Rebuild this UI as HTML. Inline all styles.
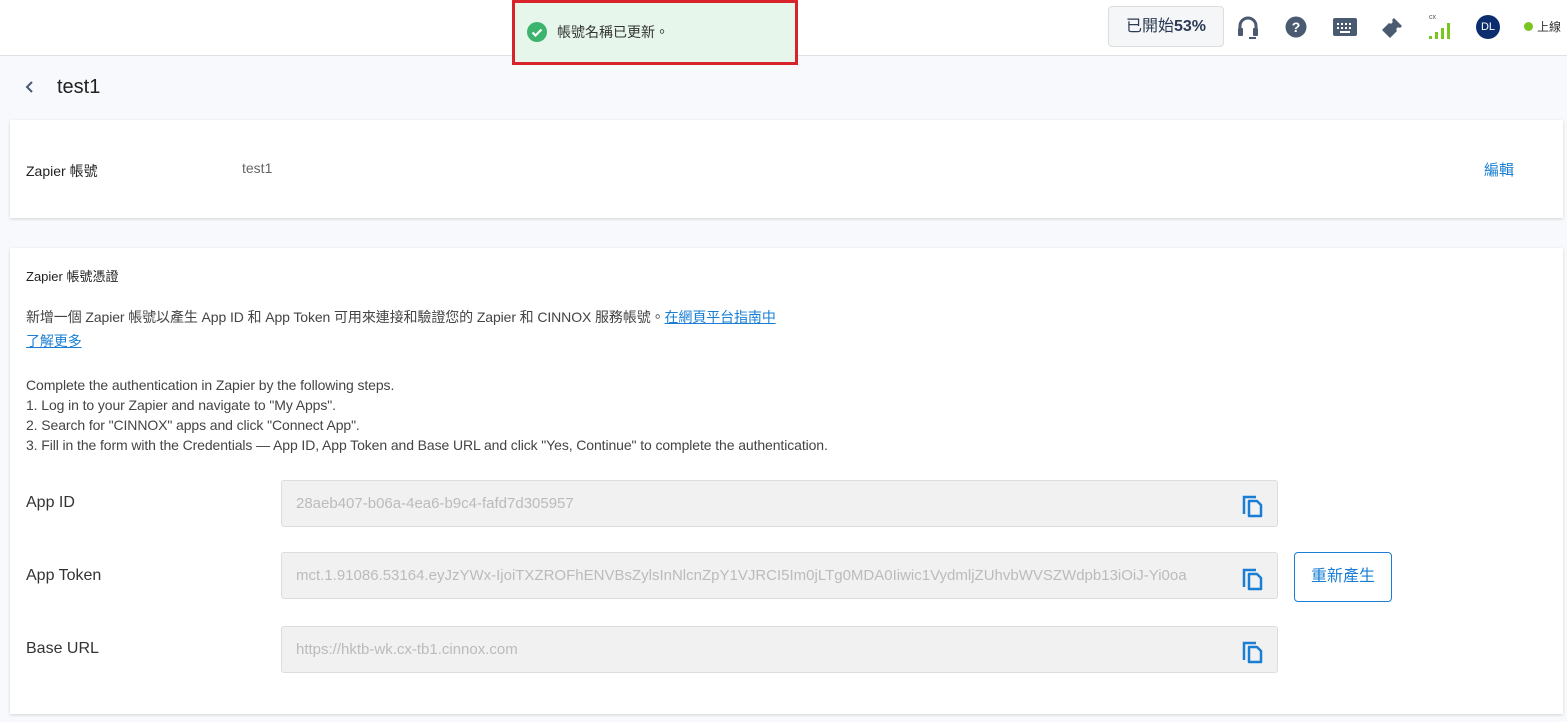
<!DOCTYPE html>
<html><head><meta charset="utf-8"><style>
*{box-sizing:border-box;margin:0;padding:0}
body{width:1567px;height:722px;overflow:hidden;background:#f7f9fc;font-family:"Liberation Sans","Noto Sans CJK TC",sans-serif;color:#333;position:relative}
.hdr{position:absolute;left:0;top:0;width:1567px;height:56px;background:#fff;border-bottom:1px solid #dde1e6}
.abs{position:absolute}
.card{position:absolute;left:10px;width:1553px;background:#fff;box-shadow:0 1px 3px rgba(0,0,0,.15)}
.inp{position:absolute;left:281px;width:997px;height:47px;background:#f1f1f1;border:1px solid #ddd;border-radius:3px;color:#bbb;font-size:15px;line-height:45px;padding-left:14px;overflow:hidden;white-space:nowrap}
.lbl{position:absolute;left:26px;font-size:16px;color:#333}
.cp{position:absolute;left:1242px}
.t{font-size:14px;color:#444;position:absolute;left:26px;letter-spacing:-0.1px}
a{color:#1a7fd4}
</style></head><body>
<div class="hdr"></div>
<div class="abs" style="left:512px;top:0;width:286px;height:65px;border:3px solid #d9232a;background:#e6f6ea"></div>
<svg class="abs" style="left:527px;top:22px" width="20" height="20"><circle cx="10" cy="10" r="10" fill="#3cb46e"/><path d="M5.5 10.5l3 3 6-6" stroke="#fff" stroke-width="2.2" fill="none"/></svg>
<div class="abs" style="left:557px;top:22px;font-size:14px;color:#333">帳號名稱已更新。</div>
<div class="abs" style="left:1108px;top:6px;width:116px;height:41px;border:1px solid #ddd;border-radius:4px;background:#f5f6f7;font-size:16px;line-height:39px;text-align:center;color:#2b3a55">已開始<b style="font-weight:bold">53%</b></div>
<svg class="abs" style="left:1237px;top:16px" width="22" height="24" viewBox="0 0 22 24"><path d="M3 14V10a8 8 0 0116 0v4" stroke="#4a5a70" stroke-width="3" fill="none"/><rect x="1" y="12" width="5" height="8" rx="1" fill="#4a5a70"/><rect x="16" y="12" width="5" height="8" rx="1" fill="#4a5a70"/><path d="M12 22h7" stroke="#4a5a70" stroke-width="2"/></svg>
<svg class="abs" style="left:1285px;top:16px" width="22" height="22"><circle cx="11" cy="11" r="10.5" fill="#4a5a70"/><text x="11" y="16" font-size="14" font-weight="bold" fill="#fff" text-anchor="middle" font-family="Liberation Sans">?</text></svg>
<svg class="abs" style="left:1333px;top:18px" width="24" height="18"><rect width="24" height="18" rx="2" fill="#4a5a70"/><g fill="#fff"><rect x="4" y="5" width="2" height="2"/><rect x="8" y="5" width="2" height="2"/><rect x="12" y="5" width="2" height="2"/><rect x="16" y="5" width="2" height="2"/><rect x="4" y="9" width="2" height="2"/><rect x="8" y="9" width="2" height="2"/><rect x="12" y="9" width="2" height="2"/><rect x="16" y="9" width="2" height="2"/><rect x="7" y="13" width="10" height="2"/></g></svg>
<svg class="abs" style="left:1380px;top:16px" width="24" height="24" viewBox="0 0 24 24"><path d="M14 2l8 8-2 2a2 2 0 00-3 3l-7 7-8-8 7-7a2 2 0 003-3z" fill="#4a5a70"/></svg>
<div class="abs" style="left:1429px;top:14px;font-size:7px;color:#555">cx</div>
<svg class="abs" style="left:1429px;top:22px" width="22" height="17"><rect x="0" y="14" width="3" height="3" fill="#7ac520"/><rect x="6" y="10" width="3" height="7" fill="#7ac520"/><rect x="12" y="6" width="3" height="11" fill="#7ac520"/><rect x="18" y="1" width="3" height="16" fill="#7ac520"/></svg>
<div class="abs" style="left:1476px;top:15px;width:24px;height:24px;border-radius:50%;background:#0d2e6e;color:#fff;font-size:11px;line-height:24px;text-align:center">DL</div>
<div class="abs" style="left:1524px;top:22px;width:9px;height:9px;border-radius:50%;background:#7ac520"></div>
<div class="abs" style="left:1537px;top:18px;font-size:12px;color:#333">上線</div>
<svg class="abs" style="left:24px;top:80px" width="10" height="14"><path d="M8 2L3 7l5 5" stroke="#4a5a70" stroke-width="2" fill="none"/></svg>
<div class="abs" style="left:57px;top:76px;font-size:20px;color:#222">test1</div>
<div class="card" style="top:120px;height:98px"></div>
<div class="abs" style="left:26px;top:161px;font-size:14px;color:#222">Zapier 帳號</div>
<div class="abs" style="left:242px;top:160px;font-size:14px;color:#666">test1</div>
<div class="abs" style="left:1484px;top:159px;font-size:15px;color:#1a7fd4">編輯</div>
<div class="card" style="top:248px;height:466px"></div>
<div class="abs" style="left:26px;top:266px;font-size:13px;color:#222">Zapier 帳號憑證</div>
<div class="t" style="top:307px">新增一個 Zapier 帳號以產生 App ID 和 App Token 可用來連接和驗證您的 Zapier 和 CINNOX 服務帳號。<a style="text-decoration:underline">在網頁平台指南中</a></div>
<div class="t" style="top:331px"><a style="text-decoration:underline">了解更多</a></div>
<div class="t" style="top:377px">Complete the authentication in Zapier by the following steps.</div>
<div class="t" style="top:397px">1. Log in to your Zapier and navigate to "My Apps".</div>
<div class="t" style="top:417px">2. Search for "CINNOX" apps and click "Connect App".</div>
<div class="t" style="top:437px">3. Fill in the form with the Credentials — App ID, App Token and Base URL and click "Yes, Continue" to complete the authentication.</div>
<div class="lbl" style="top:494px">App ID</div>
<div class="inp" style="top:480px">28aeb407-b06a-4ea6-b9c4-fafd7d305957</div>
<div class="lbl" style="top:567px">App Token</div>
<div class="inp" style="top:552px;padding-right:50px">mct.1.91086.53164.eyJzYWx-IjoiTXZROFhENVBsZylsInNlcnZpY1VJRCI5Im0jLTg0MDA0Iiwic1VydmljZUhvbWVSZWdpb13iOiJ-Yi0oa</div>
<div class="abs" style="left:1232px;top:553px;width:44px;height:45px;background:#f1f1f1"></div>
<div class="lbl" style="top:640px">Base URL</div>
<div class="inp" style="top:626px">https://hktb-wk.cx-tb1.cinnox.com</div>
<svg class="cp" style="top:494px" width="22" height="24" viewBox="0 0 22 24"><path d="M2 20V3h12" stroke="#1a7fd4" stroke-width="2.5" fill="none"/><path d="M7 7h8l4 4v11H7z" stroke="#1a7fd4" stroke-width="2.5" fill="none" stroke-linejoin="round"/></svg>
<svg class="cp" style="top:567px" width="22" height="24" viewBox="0 0 22 24"><path d="M2 20V3h12" stroke="#1a7fd4" stroke-width="2.5" fill="none"/><path d="M7 7h8l4 4v11H7z" stroke="#1a7fd4" stroke-width="2.5" fill="none" stroke-linejoin="round"/></svg>
<svg class="cp" style="top:640px" width="22" height="24" viewBox="0 0 22 24"><path d="M2 20V3h12" stroke="#1a7fd4" stroke-width="2.5" fill="none"/><path d="M7 7h8l4 4v11H7z" stroke="#1a7fd4" stroke-width="2.5" fill="none" stroke-linejoin="round"/></svg>
<div class="abs" style="left:1294px;top:552px;width:98px;height:50px;border:1px solid #1a7fd4;border-radius:4px;color:#1a7fd4;font-size:16px;line-height:48px;text-align:center;background:#fff">重新產生</div>
</body></html>
